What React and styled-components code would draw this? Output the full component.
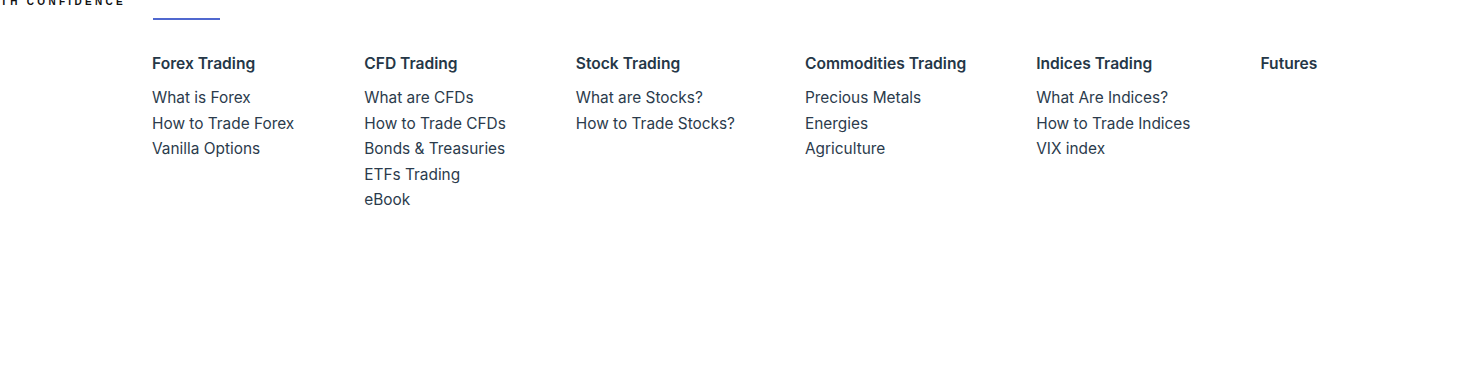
import React from "react";
import styled, { createGlobalStyle } from "styled-components";

const GlobalStyle = createGlobalStyle`
  html, body {
    margin: 0;
    padding: 0;
    background: #ffffff;
  }
  body {
    font-family: Inter, "Noto Sans", sans-serif;
    overflow: hidden;
  }
`;

const menu = [
  { title: "Forex Trading", links: ["What is Forex", "How to Trade Forex", "Vanilla Options"] },
  {
    title: "CFD Trading",
    links: ["What are CFDs", "How to Trade CFDs", "Bonds & Treasuries", "ETFs Trading", "eBook"],
  },
  { title: "Stock Trading", links: ["What are Stocks?", "How to Trade Stocks?"] },
  { title: "Commodities Trading", links: ["Precious Metals", "Energies", "Agriculture"] },
  { title: "Indices Trading", links: ["What Are Indices?", "How to Trade Indices", "VIX index"] },
  { title: "Futures", links: [] },
];

const App = () => {
  return (
    <>
      <GlobalStyle />
      <Page>
        <Tagline>With Confidence</Tagline>
        <Indicator />
        <Columns>
          {menu.map((col) => (
            <Column key={col.title}>
              <Heading>{col.title}</Heading>
              <LinkList>
                {col.links.map((l) => (
                  <li key={l}>
                    <MenuLink href="#">{l}</MenuLink>
                  </li>
                ))}
              </LinkList>
            </Column>
          ))}
        </Columns>
      </Page>
    </>
  );
};

export default App;

const Page = styled.div`
  width: 1465px;
  height: 367px;
  overflow: hidden;
  background: #fff;
`;

const Tagline = styled.div`
  font-family: "Liberation Sans", Arial, sans-serif;
  font-size: 10px;
  font-weight: 700;
  letter-spacing: 3.3px;
  text-transform: uppercase;
  color: #111;
  line-height: 10px;
  height: 10px;
  margin-top: -3px;
  margin-left: -18px;
  white-space: nowrap;
`;

const Indicator = styled.div`
  width: 67px;
  height: 2px;
  background: #5068cf;
  margin: 11px 0 0 153px;
`;

const Columns = styled.div`
  display: flex;
  gap: 70px;
  padding-left: 152px;
  margin-top: 32px;
`;

const Column = styled.div`
  display: flex;
  flex-direction: column;
`;

const Heading = styled.div`
  font-size: 15.6px;
  font-weight: 600;
  line-height: 24px;
  color: #253747;
  white-space: nowrap;
`;

const LinkList = styled.ul`
  list-style: none;
  margin: 9px 0 0;
  padding: 0;
`;

const MenuLink = styled.a`
  display: block;
  font-size: 15.4px;
  font-weight: 400;
  line-height: 25.5px;
  color: #2b3b4c;
  text-decoration: none;
  white-space: nowrap;
`;
